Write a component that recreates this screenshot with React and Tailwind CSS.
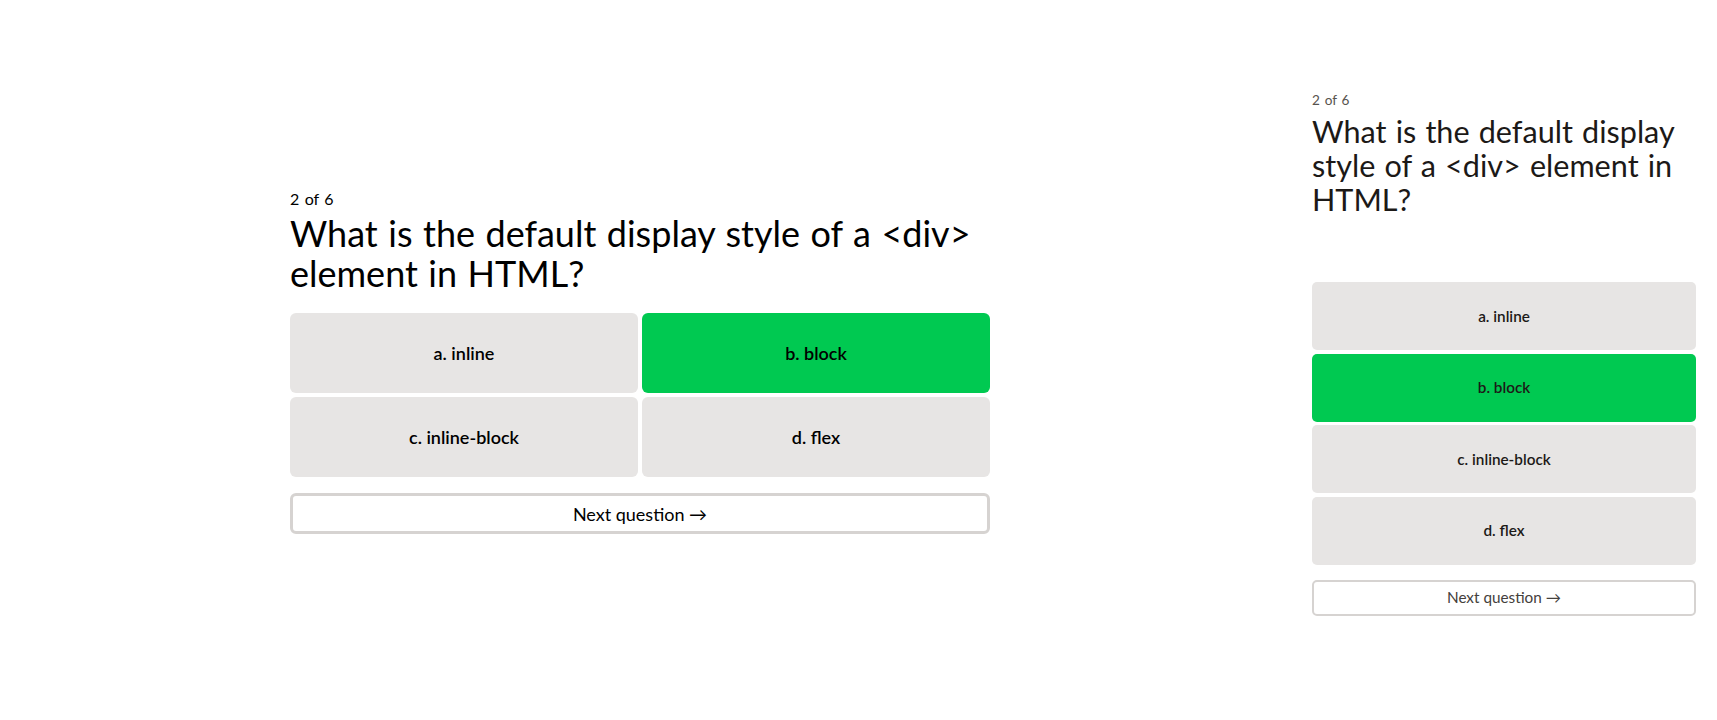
import React from "react";

const options = [
  { label: "a. inline", correct: false },
  { label: "b. block", correct: true },
  { label: "c. inline-block", correct: false },
  { label: "d. flex", correct: false },
];

export default function App() {
  return (
    <div
      className="flex w-full h-[720px] bg-white text-black [word-spacing:0.08em]"
      style={{ fontFamily: "Lato, 'Noto Sans', sans-serif" }}
    >
      {/* Desktop view */}
      <div className="w-[1280px] shrink-0 flex items-center justify-center pt-[3px]">
        <div className="w-[700px] flex flex-col">
          <div className="text-base leading-5 text-black">2 of 6</div>
          <h1 className="mt-1 text-4xl leading-10 font-normal text-black">
            What is the default display style of a &lt;div&gt; element in HTML?
          </h1>
          <div className="mt-5 grid grid-cols-2 gap-1">
            {options.map((o) => (
              <button
                key={o.label}
                className={`h-20 rounded-md flex items-center justify-center text-lg font-semibold text-black ${
                  o.correct ? "bg-[#00c951]" : "bg-[#e7e5e4]"
                }`}
              >
                {o.label}
              </button>
            ))}
          </div>
          <button className="mt-4 h-[41px] rounded-md border-[3px] border-[#d6d3d1] bg-white text-lg text-black flex items-center justify-center">
            Next question →
          </button>
        </div>
      </div>

      {/* Mobile view */}
      <div className="flex-1 pl-8 pr-[21px] pt-[90px]">
        <div className="flex flex-col">
          <div className="text-[13.6px] leading-[20.4px] text-[#57534e]">2 of 6</div>
          <h2 className="mt-[5px] text-[30.6px] leading-[34px] font-normal text-[#1c1917]">
            What is the default display style of a &lt;div&gt; element in HTML?
          </h2>
          <div className="mt-[65px] flex flex-col gap-[3.4px]">
            {options.map((o) => (
              <button
                key={o.label}
                className={`h-[68px] rounded-[5px] flex items-center justify-center text-[15.3px] font-semibold text-[#1c1917] ${
                  o.correct ? "bg-[#00c951]" : "bg-[#e7e5e4]"
                }`}
              >
                {o.label}
              </button>
            ))}
          </div>
          <button className="mt-[15px] h-[36px] rounded-[5px] border-[2.5px] border-[#d6d3d1] bg-white text-[15.3px] text-[#44403c] flex items-center justify-center">
            Next question →
          </button>
        </div>
      </div>
    </div>
  );
}
